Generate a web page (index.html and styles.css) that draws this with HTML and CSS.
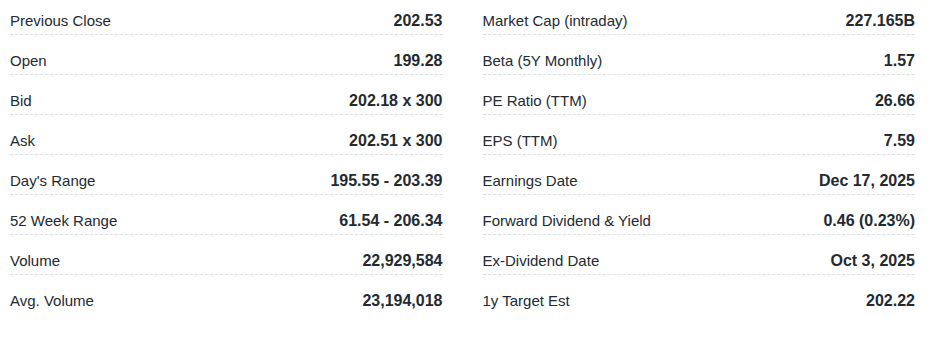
FILE: index.html
```html
<!DOCTYPE html>
<html lang="en">
<head>
<meta charset="utf-8">
<title>Quote statistics</title>
<link rel="stylesheet" href="styles.css">
</head>
<body>
<div class="stats">
  <ul class="col">
    <li class="row"><span class="label">Previous Close</span><span class="value">202.53</span></li>
    <li class="row"><span class="label">Open</span><span class="value">199.28</span></li>
    <li class="row"><span class="label">Bid</span><span class="value">202.18 x 300</span></li>
    <li class="row"><span class="label">Ask</span><span class="value">202.51 x 300</span></li>
    <li class="row"><span class="label">Day's Range</span><span class="value">195.55 - 203.39</span></li>
    <li class="row"><span class="label">52 Week Range</span><span class="value">61.54 - 206.34</span></li>
    <li class="row"><span class="label">Volume</span><span class="value">22,929,584</span></li>
    <li class="row"><span class="label">Avg. Volume</span><span class="value">23,194,018</span></li>
  </ul>
  <ul class="col">
    <li class="row"><span class="label">Market Cap (intraday)</span><span class="value">227.165B</span></li>
    <li class="row"><span class="label">Beta (5Y Monthly)</span><span class="value">1.57</span></li>
    <li class="row"><span class="label">PE Ratio (TTM)</span><span class="value">26.66</span></li>
    <li class="row"><span class="label">EPS (TTM)</span><span class="value">7.59</span></li>
    <li class="row"><span class="label">Earnings Date</span><span class="value">Dec 17, 2025</span></li>
    <li class="row"><span class="label">Forward Dividend &amp; Yield</span><span class="value">0.46 (0.23%)</span></li>
    <li class="row"><span class="label">Ex-Dividend Date</span><span class="value">Oct 3, 2025</span></li>
    <li class="row"><span class="label">1y Target Est</span><span class="value">202.22</span></li>
  </ul>
</div>
</body>
</html>
```
FILE: styles.css
```css
html, body {
  margin: 0;
  padding: 0;
  background: #ffffff;
}
body {
  font-family: "Liberation Sans", Arial, sans-serif;
  font-size: 15px;
  color: #232a31;
}
.stats {
  display: grid;
  grid-template-columns: 1fr 1fr;
  column-gap: 40px;
  padding: 0 20px 0 10px;
}
.col {
  list-style: none;
  margin: 0;
  padding: 0;
}
.row {
  display: flex;
  justify-content: space-between;
  align-items: baseline;
  height: 20px;
  line-height: 20px;
  padding: 16px 0 3px;
  border-bottom: 1px dashed #dcdfe3;
}
.row:first-child {
  padding-top: 11px;
}
.row:last-child {
  border-bottom: none;
}
.value {
  font-size: 16px;
  font-weight: 700;
}
```
